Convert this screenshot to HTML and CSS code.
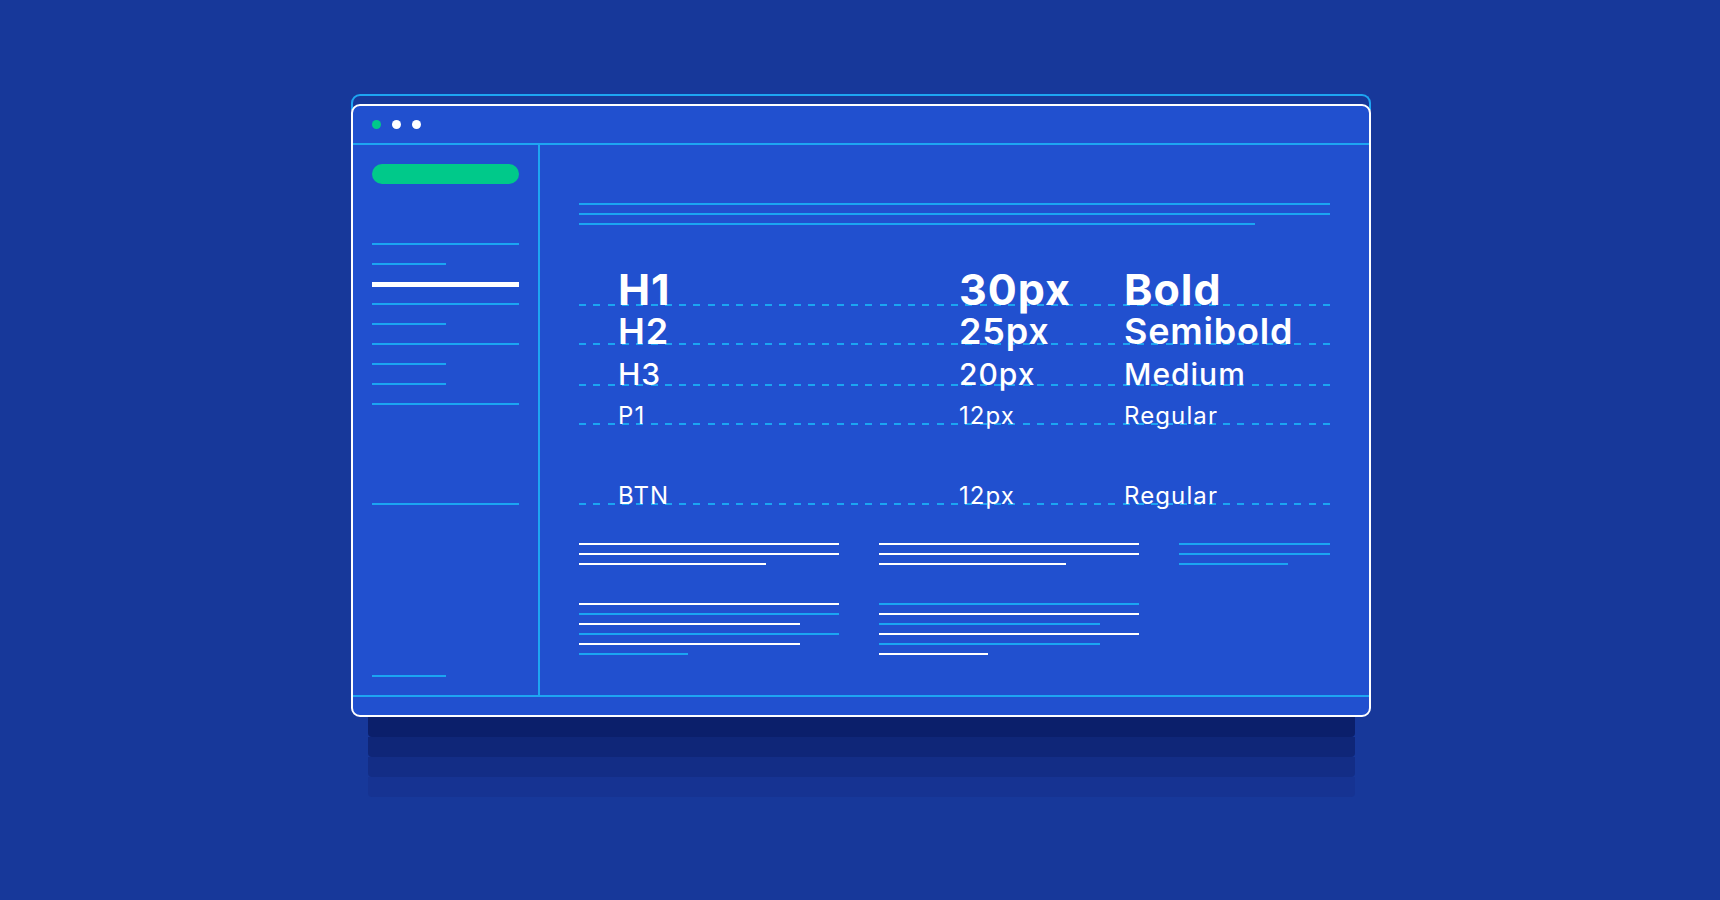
FILE: index.html
```html
<!DOCTYPE html>
<html lang="en">

<head>
    <meta charset="UTF-8">
    <meta name="viewport" content="width=device-width, initial-scale=1.0">
    <title>Typography Scale</title>
    <link rel="stylesheet" href="styles.css">
</head>

<body>

    <div class="stage">
        <div class="back-tab"></div>

        <div class="window">
            <div class="titlebar">
                <span class="dot green"></span>
                <span class="dot"></span>
                <span class="dot"></span>
            </div>

            <div class="frame-body">
                <aside class="sidebar">
                    <div class="pill"></div>
                    <div class="nav">
                        <div class="nav-row"><span class="ln"></span></div>
                        <div class="nav-row"><span class="ln half"></span></div>
                        <div class="nav-row"><span class="ln active"></span></div>
                        <div class="nav-row"><span class="ln"></span></div>
                        <div class="nav-row"><span class="ln half"></span></div>
                        <div class="nav-row"><span class="ln"></span></div>
                        <div class="nav-row"><span class="ln half"></span></div>
                        <div class="nav-row"><span class="ln half"></span></div>
                        <div class="nav-row"><span class="ln"></span></div>
                    </div>
                    <div class="nav-row nav-extra"><span class="ln"></span></div>
                    <div class="nav-row nav-foot"><span class="ln half"></span></div>
                </aside>

                <main class="content">
                    <div class="intro">
                        <span class="ln"></span>
                        <span class="ln"></span>
                        <span class="ln w90"></span>
                    </div>

                    <div class="type-scale">
                        <div class="type-row h1"><i class="dash"></i><span class="name">H1</span><span class="size">30px</span><span class="weight">Bold</span></div>
                        <div class="type-row h2"><i class="dash"></i><span class="name">H2</span><span class="size">25px</span><span class="weight">Semibold</span></div>
                        <div class="type-row h3"><i class="dash"></i><span class="name">H3</span><span class="size">20px</span><span class="weight">Medium</span></div>
                        <div class="type-row p1"><i class="dash"></i><span class="name">P1</span><span class="size">12px</span><span class="weight">Regular</span></div>
                        <div class="type-row p1 btn-row"><i class="dash"></i><span class="name">BTN</span><span class="size">12px</span><span class="weight">Regular</span></div>
                    </div>

                    <div class="blocks">
                        <div class="stack">
                            <span class="ln white"></span>
                            <span class="ln white"></span>
                            <span class="ln white w72"></span>
                        </div>
                        <div class="stack">
                            <span class="ln white"></span>
                            <span class="ln white"></span>
                            <span class="ln white w72"></span>
                        </div>
                        <div class="stack">
                            <span class="ln"></span>
                            <span class="ln"></span>
                            <span class="ln w72"></span>
                        </div>

                        <div class="stack">
                            <span class="ln white"></span>
                            <span class="ln"></span>
                            <span class="ln white w85"></span>
                            <span class="ln"></span>
                            <span class="ln white w85"></span>
                            <span class="ln w42"></span>
                        </div>
                        <div class="stack">
                            <span class="ln"></span>
                            <span class="ln white"></span>
                            <span class="ln w85"></span>
                            <span class="ln white"></span>
                            <span class="ln w85"></span>
                            <span class="ln white w42"></span>
                        </div>
                    </div>
                </main>
            </div>

            <div class="statusbar"></div>
        </div>

        <div class="shadow">
            <div></div>
            <div></div>
            <div></div>
            <div></div>
        </div>
    </div>

</body>

</html>
```

FILE: styles.css
```css
* {
    box-sizing: border-box;
}

body {
    margin: 0;
    min-height: 900px;
    background: #17389a;
    font-family: Inter, "Noto Sans", sans-serif;
    color: #fff;
}

.stage {
    width: 1020px;
    margin: 94px 0 0 351px;
}

/* second window peeking out behind the main one */
.back-tab {
    height: 16px;
    border: 2px solid #1ea5f2;
    border-bottom: none;
    border-radius: 9px 9px 0 0;
}

.window {
    position: relative;
    z-index: 1;
    height: 613px;
    margin-top: -6px;
    border: 2px solid #fff;
    border-radius: 9px;
    background: #2150cf;
    display: flex;
    flex-direction: column;
}

.titlebar {
    height: 39px;
    padding-left: 19px;
    border-bottom: 2px solid #1ea5f2;
    display: flex;
    align-items: center;
    gap: 11px;
}

.dot {
    width: 9px;
    height: 9px;
    border-radius: 50%;
    background: #fff;
}

.dot.green {
    background: #00c98a;
}

.frame-body {
    height: 550px;
    display: flex;
}

.statusbar {
    height: 20px;
    border-top: 2px solid #1ea5f2;
}

/* lines used as placeholder text */
.ln {
    display: block;
    height: 2px;
    width: 100%;
    background: #1ba5f2;
}

.ln.white {
    background: #fff;
}

.w90 { width: 90%; }
.w85 { width: 85%; }
.w72 { width: 72%; }
.w42 { width: 42%; }

/* sidebar */
.sidebar {
    width: 187px;
    padding: 19px 19px 9px 19px;
    border-right: 2px solid #1ea5f2;
    display: flex;
    flex-direction: column;
}

.pill {
    height: 20px;
    border-radius: 10px;
    background: #00c98a;
    margin-bottom: 50px;
}

.nav-row {
    height: 20px;
    display: flex;
    align-items: center;
}

.nav-row .ln.half {
    width: 74px;
}

.nav-row .ln.active {
    height: 5px;
    background: #fff;
}

.nav-extra {
    margin-top: 80px;
}

.nav-foot {
    margin-top: auto;
}

/* main panel */
.content {
    flex: 1;
    padding: 58px 39px 0 39px;
}

.intro {
    display: flex;
    flex-direction: column;
    gap: 8px;
}

.type-scale {
    margin-top: 48px;
}

.type-row {
    height: 40px;
    white-space: nowrap;
}

.type-row .dash {
    display: inline-block;
    vertical-align: baseline;
    width: 751px;
    height: 2px;
    margin-right: -751px;
    margin-bottom: -1px;
    background: repeating-linear-gradient(to right, #1ba5f2 0 7px, transparent 7px 14.31px);
}

.type-row span {
    display: inline-block;
}

.type-row .name {
    width: 341px;
    margin-left: 39px;
}

.type-row .size {
    width: 165px;
}

.h1 {
    font-size: 43px;
    font-weight: 700;
    line-height: 32.7px;
    letter-spacing: 1px;
}

.h2 {
    font-size: 36px;
    font-weight: 600;
    line-height: 37.8px;
    letter-spacing: 0.8px;
}

.h3 {
    font-size: 30px;
    font-weight: 500;
    line-height: 42.2px;
    letter-spacing: 1px;
}

.p1 {
    font-size: 24px;
    font-weight: 400;
    line-height: 46.6px;
    letter-spacing: 1.1px;
}

.btn-row {
    margin-top: 40px;
}

.blocks {
    margin-top: 30px;
    display: grid;
    grid-template-columns: 260px 260px 151px;
    column-gap: 40px;
    row-gap: 38px;
    align-items: start;
}

.stack {
    display: flex;
    flex-direction: column;
    gap: 8px;
}

/* stacked shade under the window */
.shadow {
    margin: 0 16px 0 17px;
}

.shadow div {
    height: 20px;
    border-radius: 0 0 4px 4px;
}

.shadow div:nth-child(1) { background: #0b1f6b; }
.shadow div:nth-child(2) { background: #0f2678; }
.shadow div:nth-child(3) { background: #132d86; }
.shadow div:nth-child(4) { background: #163392; }
```
